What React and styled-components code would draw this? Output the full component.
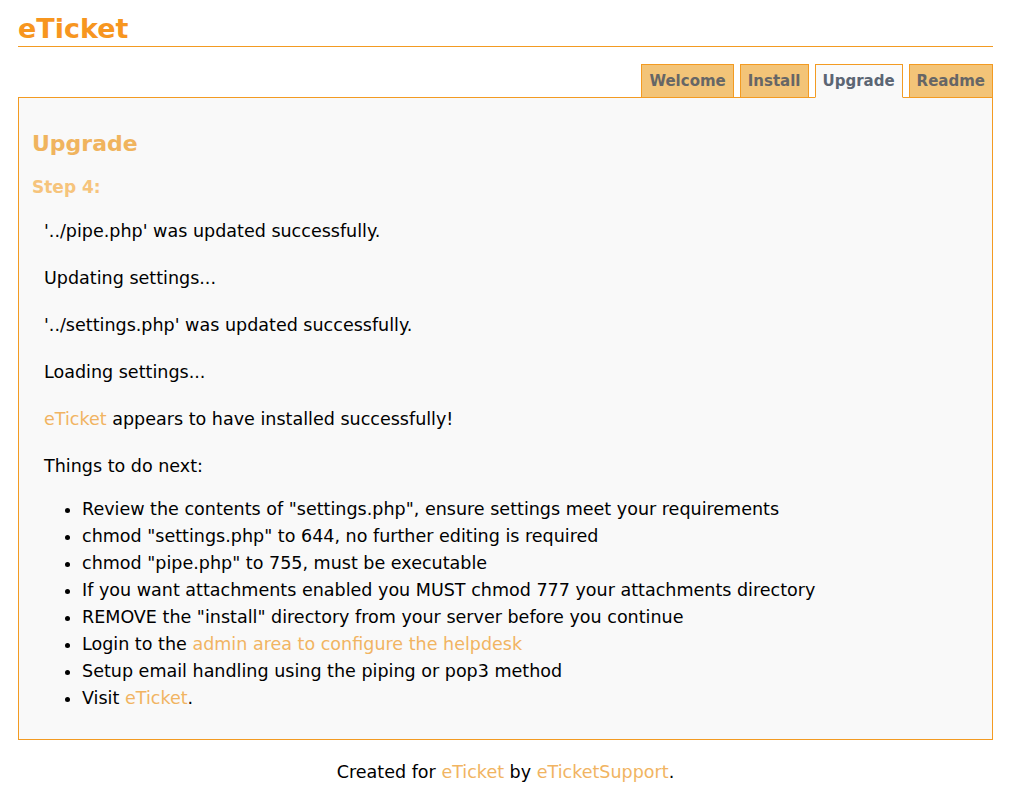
import React from 'react';
import styled, { createGlobalStyle } from 'styled-components';

const ORANGE = '#f39b22';
const LINK = '#f1b462';

const GlobalStyle = createGlobalStyle`
  body {
    margin: 0;
    background: #fff;
    font-family: "DejaVu Sans", Verdana, sans-serif;
    color: #000;
  }
`;

const Page = styled.div`
  padding: 0 20px 0 18px;
`;

const Title = styled.h1`
  margin: 13px 0 0;
  padding-bottom: 1px;
  font-size: 27px;
  line-height: 32px;
  color: #f7961f;
  border-bottom: 1px solid ${ORANGE};
`;

const TabBar = styled.div`
  display: flex;
  justify-content: flex-end;
  gap: 6px;
  margin-top: 17px;
  margin-bottom: -1px;
  position: relative;
  z-index: 1;
`;

const Tab = styled.a`
  box-sizing: border-box;
  height: 34px;
  padding: 0 7px;
  line-height: 33px;
  font-size: 15px;
  font-weight: bold;
  color: ${(p) => (p.$active ? '#5c6674' : '#666')};
  background: ${(p) => (p.$active ? '#f9f9f9' : '#f3c478')};
  border: 1px solid ${ORANGE};
  border-bottom-color: ${(p) => (p.$active ? '#f9f9f9' : ORANGE)};
  text-decoration: none;
`;

const Panel = styled.div`
  background: #f9f9f9;
  border: 1px solid ${ORANGE};
  padding: 31px 13px 27px;
`;

const Heading = styled.h2`
  margin: 0;
  font-size: 22px;
  line-height: 30px;
  color: #f0b45e;
`;

const Step = styled.h3`
  margin: 17px 0 23px;
  font-size: 17px;
  line-height: 22px;
  color: #f6c47c;
`;

const Body = styled.div`
  padding-left: 12px;
  font-size: 17.55px;
`;

const Para = styled.p`
  margin: 0 0 ${(p) => (p.$last ? 0 : 27)}px;
  line-height: 20px;
`;

const List = styled.ul`
  margin: 20px 0 0;
  padding-left: 38px;
  line-height: 27px;
`;

const Link = styled.a`
  color: ${LINK};
  text-decoration: none;
`;

const Footer = styled.div`
  margin-top: 22px;
  text-align: center;
  font-size: 17.55px;
  line-height: 20px;
`;

const tabs = ['Welcome', 'Install', 'Upgrade', 'Readme'];

const App = () => (
  <Page>
    <GlobalStyle />
    <Title>eTicket</Title>
    <TabBar>
      {tabs.map((t) => (
        <Tab key={t} href="#" $active={t === 'Upgrade'}>{t}</Tab>
      ))}
    </TabBar>
    <Panel>
      <Heading>Upgrade</Heading>
      <Step>Step 4:</Step>
      <Body>
        <Para>'../pipe.php' was updated successfully.</Para>
        <Para>Updating settings...</Para>
        <Para>'../settings.php' was updated successfully.</Para>
        <Para>Loading settings...</Para>
        <Para><Link href="#">eTicket</Link> appears to have installed successfully!</Para>
        <Para $last>Things to do next:</Para>
        <List>
          <li>Review the contents of "settings.php", ensure settings meet your requirements</li>
          <li>chmod "settings.php" to 644, no further editing is required</li>
          <li>chmod "pipe.php" to 755, must be executable</li>
          <li>If you want attachments enabled you MUST chmod 777 your attachments directory</li>
          <li>REMOVE the "install" directory from your server before you continue</li>
          <li>Login to the <Link href="#">admin area to configure the helpdesk</Link></li>
          <li>Setup email handling using the piping or pop3 method</li>
          <li>Visit <Link href="#">eTicket</Link>.</li>
        </List>
      </Body>
    </Panel>
    <Footer>
      Created for <Link href="#">eTicket</Link> by <Link href="#">eTicketSupport</Link>.
    </Footer>
  </Page>
);

export default App;
